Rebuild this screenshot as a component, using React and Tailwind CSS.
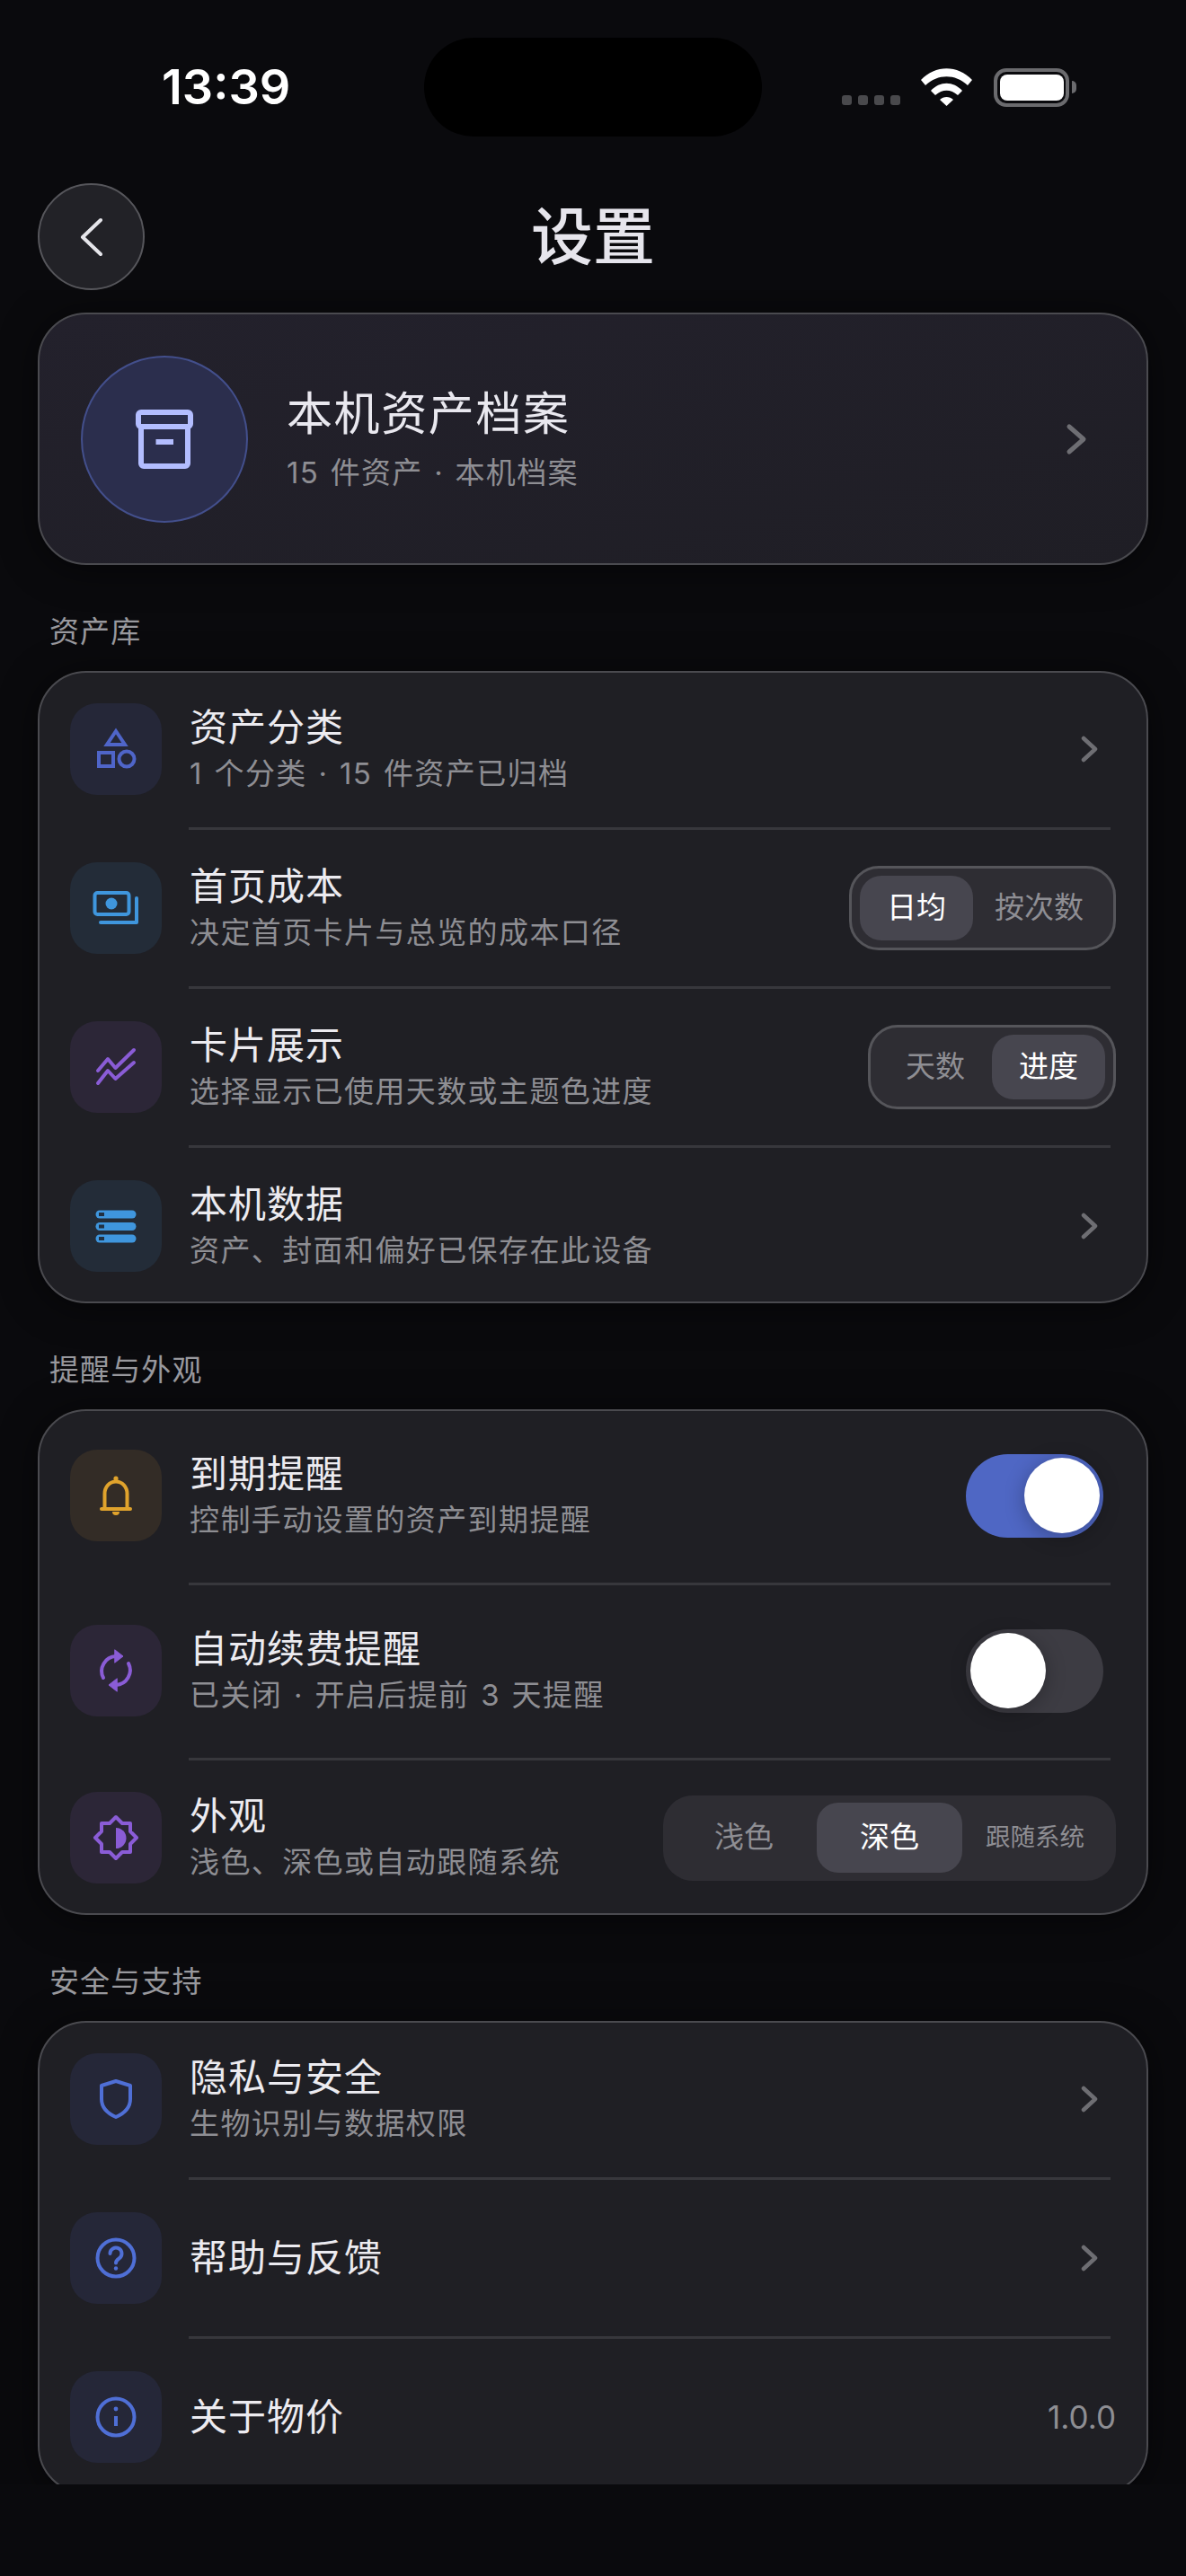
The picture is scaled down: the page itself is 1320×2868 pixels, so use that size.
import React from 'react';

const FONT = '[font-family:Inter,"Noto_Sans_CJK_SC",sans-serif]';

const Glyph = ({ color, children }) => (
  <svg width="60" height="60" viewBox="0 0 60 60" fill="none" stroke={color} strokeWidth="4" strokeLinecap="round" strokeLinejoin="round">
    {children}
  </svg>
);

const IconShapes = () => (
  <Glyph color="#4f65c9">
    <path d="M30 10 L40 25 H20 Z" strokeLinecap="butt" strokeLinejoin="miter" />
    <rect x="11" y="34" width="16" height="15" strokeLinejoin="miter" />
    <circle cx="42" cy="41" r="8.5" />
  </Glyph>
);

const IconCost = () => (
  <Glyph color="#3f96dd">
    <rect x="6.5" y="13" width="38" height="24" rx="3" />
    <circle cx="25" cy="25" r="6.5" fill="#3f96dd" stroke="none" />
    <path d="M13 46 H53 V19" />
  </Glyph>
);

const IconTrend = () => (
  <Glyph color="#8a5cd6">
    <path d="M10 34 L21 21 L29.5 31 L50 11" />
    <path d="M10 48 L21 34 L29.5 43 L50 25" />
  </Glyph>
);

const IconData = () => (
  <Glyph color="#3f96dd">
    <rect x="7.5" y="12.5" width="45" height="9" rx="4.5" fill="#3f96dd" stroke="none" />
    <rect x="7.5" y="26" width="45" height="9" rx="4.5" fill="#3f96dd" stroke="none" />
    <rect x="7.5" y="39.5" width="45" height="9" rx="4.5" fill="#3f96dd" stroke="none" />
    <rect x="11" y="15" width="6" height="4" fill="#223040" stroke="none" />
    <rect x="11" y="28.5" width="6" height="4" fill="#223040" stroke="none" />
    <rect x="11" y="42" width="6" height="4" fill="#223040" stroke="none" />
  </Glyph>
);

const IconBell = () => (
  <Glyph color="#e0a32c">
    <circle cx="30" cy="11" r="2.6" fill="#e0a32c" stroke="none" />
    <path d="M17.5 43 V28 a12.5 13.5 0 0 1 25 0 V43" />
    <path d="M14 45 H46" />
    <path d="M26 48 H34 a4 4 0 0 1 -8 0 Z" fill="#e0a32c" stroke="none" />
  </Glyph>
);

const IconRepeat = () => (
  <Glyph color="#8a5cd6">
    <path d="M16 38 A16.5 16.5 0 0 1 30 14" />
    <path d="M44 22 A16.5 16.5 0 0 1 30 46" />
    <path d="M29 7 L38 14 L29 21 Z" fill="#8a5cd6" strokeWidth="1" />
    <path d="M31 39 L22 46 L31 53 Z" fill="#8a5cd6" strokeWidth="1" />
  </Glyph>
);

const IconContrast = () => (
  <Glyph color="#8a5cd6">
    <path d="M30 7 L37 14 H46 V23 L53 30 L46 37 V46 H37 L30 53 L23 46 H14 V37 L7 30 L14 23 V14 H23 Z" strokeLinecap="butt" />
    <path d="M30 19 a11.5 11.5 0 0 1 0 23 Z" fill="#8a5cd6" stroke="none" />
  </Glyph>
);

const IconShield = () => (
  <Glyph color="#4f6fd6">
    <path d="M30 10 L46 15 V30 C46 40 38 46.5 30 50 C22 46.5 14 40 14 30 V15 Z" />
  </Glyph>
);

const IconHelp = () => (
  <Glyph color="#4f6fd6">
    <circle cx="30" cy="30" r="20.5" />
    <path d="M23.5 25 a6.5 6.5 0 1 1 10 5.5 c-2.4 1.6 -3.5 2.6 -3.5 5" />
    <circle cx="30" cy="41.5" r="2.2" fill="#4f6fd6" stroke="none" />
  </Glyph>
);

const IconInfo = () => (
  <Glyph color="#4f6fd6">
    <circle cx="30" cy="30" r="20.5" />
    <circle cx="30" cy="21" r="2.4" fill="#4f6fd6" stroke="none" />
    <path d="M30 29 V40" strokeLinecap="butt" />
  </Glyph>
);

const Chevron = () => (
  <svg className="mr-[19px]" width="20" height="30" viewBox="0 0 20 30" fill="none" stroke="#6e6e73" strokeWidth="4.5" strokeLinecap="round" strokeLinejoin="round">
    <path d="M3 3 L16 15 L3 27" />
  </svg>
);

const Divider = () => <div className="ml-[166px] mr-[40px] h-[3px] bg-[#37373c]" />;

const SectionLabel = ({ children }) => (
  <div className="mt-[52px] mb-[22px] pl-[13px] text-[33px] leading-[44px] tracking-[1.1px] text-[#98989d]">{children}</div>
);

const Card = ({ children }) => (
  <div className="rounded-[54px] border-2 border-[#4a4a4f] bg-[#1f1f24] shadow-[0_4px_40px_rgba(0,0,0,0.5)]">{children}</div>
);

const Row = ({ pad, tint, icon, title, sub, children }) => (
  <div className={`flex items-center pl-[34px] pr-[34px] ${pad}`}>
    <div className={`flex h-[102px] w-[102px] shrink-0 items-center justify-center rounded-[30px] ${tint}`}>{icon}</div>
    <div className="ml-[31px] flex min-w-0 flex-1 flex-col gap-[4px]">
      <div className="text-[42px] leading-[50px] tracking-[1px] text-[#ecebf0]">{title}</div>
      {sub && <div className="text-[33px] leading-[44px] tracking-[1.4px] whitespace-nowrap text-[#8e8e93] [word-spacing:2px]">{sub}</div>}
    </div>
    {children}
  </div>
);

const SegItem = ({ active, className, children }) => (
  <div className={`flex items-center justify-center rounded-[24px] ${active ? 'bg-[#47464f] text-white' : 'text-[#8e8e93]'} ${className}`}>
    {children}
  </div>
);

const Segment = ({ className, children }) => (
  <div className={`flex shrink-0 rounded-[33px] bg-[#2e2d33] ${className}`}>{children}</div>
);

const Toggle = ({ on }) => (
  <div className={`mr-[14px] flex h-[93px] w-[153px] shrink-0 items-center rounded-full ${on ? 'justify-end bg-[#4f67c4] pr-[4px]' : 'justify-start bg-[#3d3c43] pl-[5px]'}`}>
    <div className="h-[84px] w-[84px] rounded-full bg-white shadow-[0_4px_22px_rgba(0,0,0,0.28)]" />
  </div>
);

const StatusBar = () => (
  <div className="mt-[42px] flex h-[110px] items-center">
    <div className="w-[472px] pl-[180px] text-[54px] leading-none font-semibold text-white">13:39</div>
    <div className="h-[110px] w-[376px] rounded-[55px] bg-black" />
    <div className="flex flex-1 items-start pl-[89px]">
      <svg className="mt-[30px]" width="65" height="12" viewBox="0 0 65 12" fill="#49494c">
        <rect x="0" y="0" width="11" height="11" rx="3" />
        <rect x="18" y="0" width="11" height="11" rx="3" />
        <rect x="36" y="0" width="11" height="11" rx="3" />
        <rect x="54" y="0" width="11" height="11" rx="3" />
      </svg>
      <svg className="ml-[23px]" width="57" height="42" viewBox="0 0 57 42" fill="white">
        <path d="M0 13 C16 -4 41 -4 57 13 L52 19 C38 6 19 6 5 19 Z" />
        <path d="M11 25 C21 14 36 14 46 25 L41 30 C33 23 24 23 16 30 Z" />
        <path d="M21 35 C25 31 32 31 36 35 L28.5 42 Z" />
      </svg>
      <div className="ml-[24px] flex items-center">
        <div className="flex h-[43px] w-[84px] items-center justify-center rounded-[14px] border-[4px] border-[#6b6b6e]">
          <div className="h-[29px] w-[71px] rounded-[8px] bg-white" />
        </div>
        <div className="ml-[3px] h-[14px] w-[5px] rounded-r-full bg-[#6b6b6e]" />
      </div>
    </div>
  </div>
);

const Header = () => (
  <div className="mt-[52px] flex items-center justify-between px-[42px]">
    <div className="flex h-[119px] w-[119px] items-center justify-center rounded-full border-2 border-[#56565b] bg-[#222227]">
      <svg width="30" height="44" viewBox="0 0 30 44" fill="none" stroke="#e5e5ea" strokeWidth="4" strokeLinecap="round" strokeLinejoin="round">
        <path d="M25 3 L5 22 L25 41" />
      </svg>
    </div>
    <div className="text-[69px] leading-[80px] font-medium text-[#e6e5ec]">设置</div>
    <div className="w-[119px]" />
  </div>
);

const Hero = () => (
  <div className="flex h-[281px] items-center rounded-[54px] border-2 border-[#4a4a4f] bg-gradient-to-br from-[#23212c] to-[#1f1e25] pl-[46px] pr-[66px] shadow-[0_4px_40px_rgba(0,0,0,0.5)]">
    <div className="flex h-[186px] w-[186px] shrink-0 items-center justify-center rounded-full border-2 border-[#434f8c] bg-[#2b2e4d]">
      <svg width="80" height="80" viewBox="0 0 80 80" fill="none" stroke="#b3bdff" strokeWidth="6" strokeLinejoin="round">
        <rect x="11" y="10" width="58" height="16" rx="3" />
        <path d="M14 28 V67 a3 3 0 0 0 3 3 H63 a3 3 0 0 0 3 -3 V28" />
        <rect x="30.5" y="40" width="19.5" height="6" fill="#b3bdff" stroke="none" />
      </svg>
    </div>
    <div className="ml-[43px] flex flex-1 flex-col gap-[12px]">
      <div className="text-[51px] leading-[62px] tracking-[1.6px] text-[#e9e8ef]">本机资产档案</div>
      <div className="text-[33px] leading-[44px] tracking-[1.3px] text-[#8e8e93] [word-spacing:2px]">15 件资产 · 本机档案</div>
    </div>
    <svg width="24" height="36" viewBox="0 0 24 36" fill="none" stroke="#6e6e73" strokeWidth="5" strokeLinecap="round" strokeLinejoin="round">
      <path d="M4 4 L20 18 L4 32" />
    </svg>
  </div>
);

export default function App() {
  return (
    <div className={`flex h-[2868px] w-[1320px] flex-col overflow-hidden bg-[#0a0a0d] ${FONT}`}>
      <StatusBar />
      <Header />
      <div className="h-[2443px] overflow-hidden px-[42px] pt-[25px]">
        <Hero />

        <SectionLabel>资产库</SectionLabel>
        <Card>
          <Row pad="pt-[34px] pb-[36px]" tint="bg-[#252738]" icon={<IconShapes />} title="资产分类" sub="1 个分类 · 15 件资产已归档">
            <Chevron />
          </Row>
          <Divider />
          <Row pad="py-[36px]" tint="bg-[#232c38]" icon={<IconCost />} title="首页成本" sub="决定首页卡片与总览的成本口径">
            <Segment className="h-[94px] border-[3px] border-[#55555a] py-[8px] pl-[9px] pr-[9px] text-[33px]">
              <SegItem active className="w-[126px]">日均</SegItem>
              <SegItem className="w-[147px]">按次数</SegItem>
            </Segment>
          </Row>
          <Divider />
          <Row pad="py-[36px]" tint="bg-[#2c2637]" icon={<IconTrend />} title="卡片展示" sub="选择显示已使用天数或主题色进度">
            <Segment className="h-[94px] border-[3px] border-[#55555a] py-[8px] pl-[9px] pr-[9px] text-[33px]">
              <SegItem className="w-[126px]">天数</SegItem>
              <SegItem active className="w-[126px]">进度</SegItem>
            </Segment>
          </Row>
          <Divider />
          <Row pad="pt-[36px] pb-[33px]" tint="bg-[#232c38]" icon={<IconData />} title="本机数据" sub="资产、封面和偏好已保存在此设备">
            <Chevron />
          </Row>
        </Card>

        <SectionLabel>提醒与外观</SectionLabel>
        <Card>
          <Row pad="pt-[43px] pb-[46px]" tint="bg-[#332c26]" icon={<IconBell />} title="到期提醒" sub="控制手动设置的资产到期提醒">
            <Toggle on />
          </Row>
          <Divider />
          <Row pad="pt-[44px] pb-[46px]" tint="bg-[#2c2637]" icon={<IconRepeat />} title="自动续费提醒" sub="已关闭 · 开启后提前 3 天提醒">
            <Toggle />
          </Row>
          <Divider />
          <Row pad="pt-[35px] pb-[33px]" tint="bg-[#2c2637]" icon={<IconContrast />} title="外观" sub="浅色、深色或自动跟随系统">
            <Segment className="h-[95px] px-[9px] py-[8.5px] text-[33px]">
              <SegItem className="w-[162px]">浅色</SegItem>
              <SegItem active className="w-[162px]">深色</SegItem>
              <SegItem className="w-[162px] text-[27.5px]">跟随系统</SegItem>
            </Segment>
          </Row>
        </Card>

        <SectionLabel>安全与支持</SectionLabel>
        <Card>
          <Row pad="pt-[34px] pb-[36px]" tint="bg-[#252738]" icon={<IconShield />} title="隐私与安全" sub="生物识别与数据权限">
            <Chevron />
          </Row>
          <Divider />
          <Row pad="py-[36px]" tint="bg-[#252738]" icon={<IconHelp />} title="帮助与反馈">
            <Chevron />
          </Row>
          <Divider />
          <Row pad="pt-[36px] pb-[33px]" tint="bg-[#252738]" icon={<IconInfo />} title="关于物价">
            <div className="text-[35px] text-[#8e8e93]">1.0.0</div>
          </Row>
        </Card>
      </div>
    </div>
  );
}
